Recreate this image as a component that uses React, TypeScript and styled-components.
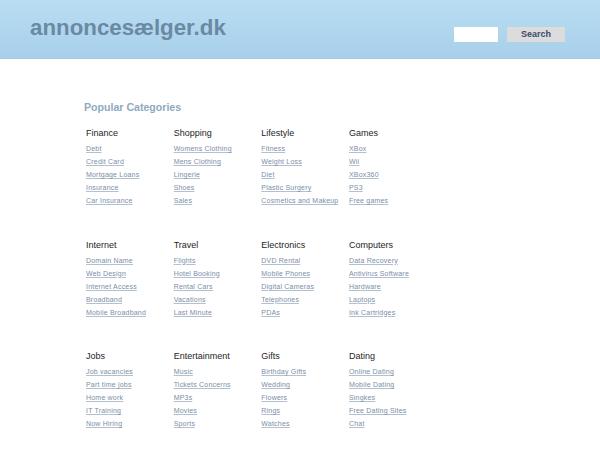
import React from 'react';
import styled, { createGlobalStyle } from 'styled-components';

const GlobalStyle = createGlobalStyle`
  body {
    margin: 0;
    background: #ffffff;
    font-family: 'Liberation Sans', Arial, sans-serif;
  }
`;

const Header = styled.div`
  height: 59px;
  box-sizing: border-box;
  display: flex;
  align-items: center;
  justify-content: space-between;
  padding: 0 35px 0 30px;
  background: linear-gradient(to bottom, #b9def3 0%, #a8cfea 100%);
  border-bottom: 1px solid #a2c8e2;
`;

const Logo = styled.div`
  font-size: 22.3px;
  font-weight: bold;
  color: #6a89a2;
  margin-top: -2px;
`;

const SearchForm = styled.div`
  display: flex;
  align-items: center;
  gap: 9px;
  margin-top: 10px;
`;

const SearchInput = styled.div`
  width: 44px;
  height: 15px;
  background: #ffffff;
`;

const SearchButton = styled.div`
  width: 58px;
  height: 15px;
  background: #dcdcdc;
  color: #3b4a6b;
  font-size: 9px;
  font-weight: bold;
  display: flex;
  align-items: center;
  justify-content: center;
`;

const Content = styled.div`
  padding: 42px 0 0 84px;
`;

const Title = styled.div`
  font-size: 10.6px;
  font-weight: bold;
  color: #8eaac0;
  line-height: 12px;
  margin-bottom: 14px;
`;

const Group = styled.div`
  display: grid;
  grid-template-columns: repeat(4, 87.67px);
  padding-left: 2px;
  height: 111.5px;
`;

const Column = styled.div`
  display: flex;
  flex-direction: column;
`;

const Heading = styled.div`
  font-size: 9px;
  color: #1e1e1e;
  line-height: 12px;
  margin-bottom: 3px;
`;

const Link = styled.a`
  font-size: 7px;
  letter-spacing: 0.2px;
  line-height: 13px;
  color: #7b8ea6;
  text-decoration: underline;
  text-decoration-color: #b3c0cf;
  white-space: nowrap;
`;

const groups: { title: string; links: string[] }[][] = [
  [
    { title: 'Finance', links: ['Debt', 'Credit Card', 'Mortgage Loans', 'Insurance', 'Car Insurance'] },
    { title: 'Shopping', links: ['Womens Clothing', 'Mens Clothing', 'Lingerie', 'Shoes', 'Sales'] },
    { title: 'Lifestyle', links: ['Fitness', 'Weight Loss', 'Diet', 'Plastic Surgery', 'Cosmetics and Makeup'] },
    { title: 'Games', links: ['XBox', 'Wii', 'XBox360', 'PS3', 'Free games'] },
  ],
  [
    { title: 'Internet', links: ['Domain Name', 'Web Design', 'Internet Access', 'Broadband', 'Mobile Broadband'] },
    { title: 'Travel', links: ['Flights', 'Hotel Booking', 'Rental Cars', 'Vacations', 'Last Minute'] },
    { title: 'Electronics', links: ['DVD Rental', 'Mobile Phones', 'Digital Cameras', 'Telephones', 'PDAs'] },
    { title: 'Computers', links: ['Data Recovery', 'Antivirus Software', 'Hardware', 'Laptops', 'Ink Cartridges'] },
  ],
  [
    { title: 'Jobs', links: ['Job vacancies', 'Part time jobs', 'Home work', 'IT Training', 'Now Hiring'] },
    { title: 'Entertainment', links: ['Music', 'Tickets Concerns', 'MP3s', 'Movies', 'Sports'] },
    { title: 'Gifts', links: ['Birthday Gifts', 'Wedding', 'Flowers', 'Rings', 'Watches'] },
    { title: 'Dating', links: ['Online Dating', 'Mobile Dating', 'Singkes', 'Free Dating Sites', 'Chat'] },
  ],
];

const App = () => {
  return (
    <>
      <GlobalStyle />
      <Header>
        <Logo>annoncesælger.dk</Logo>
        <SearchForm>
          <SearchInput />
          <SearchButton>Search</SearchButton>
        </SearchForm>
      </Header>
      <Content>
        <Title>Popular Categories</Title>
        {groups.map((group, i) => (
          <Group key={i}>
            {group.map((col) => (
              <Column key={col.title}>
                <Heading>{col.title}</Heading>
                {col.links.map((l) => (
                  <Link key={l}>{l}</Link>
                ))}
              </Column>
            ))}
          </Group>
        ))}
      </Content>
    </>
  );
};

export default App;
